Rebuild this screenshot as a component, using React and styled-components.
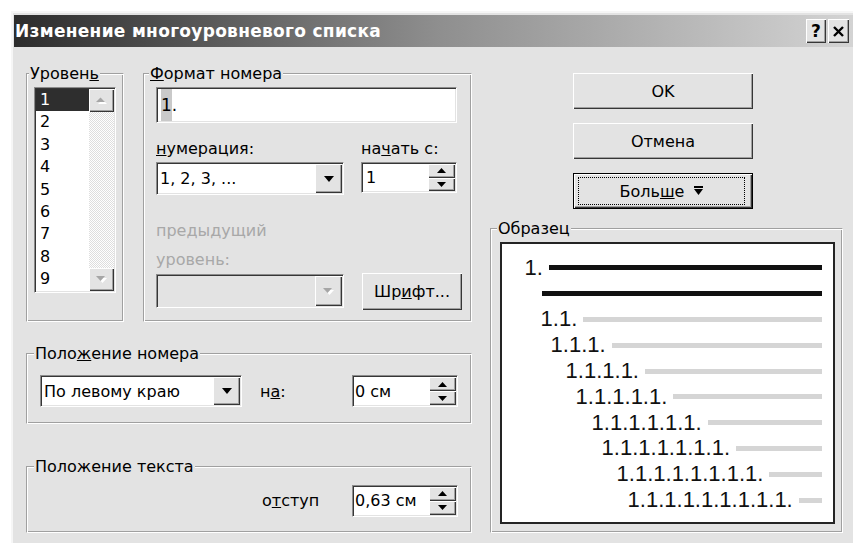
import React from 'react'
import styled, { createGlobalStyle, css } from 'styled-components'

// classic 3D palette, grey
const face = '#e3e3e3'
const light = '#ffffff'
const shadow = '#a0a0a0'
const dark = '#363636'
const grayText = '#a8a8a8'
const uiFont = 'Tahoma, "DejaVu Sans", sans-serif'

const GlobalStyle = createGlobalStyle`
  html, body { margin: 0; padding: 0; background: #fff; }
  body { width: 853px; height: 543px; overflow: hidden; }
`

const raised = css`
  background: ${face};
  box-shadow: inset 1px 1px ${light}, inset -1px -1px ${dark}, inset -2px -2px ${shadow};
`

const sunken = css`
  box-sizing: border-box;
  border: 1px solid;
  border-color: #8c8c8c ${light} ${light} #8c8c8c;
  box-shadow: inset 1px 1px ${dark}, inset -1px -1px ${face};
  padding: 1px;
`

const Window = styled.div`
  box-sizing: border-box;
  width: 846px;
  height: 532px;
  overflow: hidden;
  margin: 11px 0 0 11px;
  border-top: 2px solid #f6f6f6;
  border-left: 2px solid #f6f6f6;
  padding: 2px 0 0 1px;
  background: ${face};
  font: 16px ${uiFont};
  color: #000;
`

const TitleBar = styled.div`
  height: 32px;
  display: flex;
  align-items: center;
  padding-left: 1px;
  background: linear-gradient(to right, #2c2c2c 0%, #8e8e8e 50%, #d4d4d4 100%);
`

const Title = styled.div`
  flex: 1;
  color: #fff;
  font-weight: bold;
  font-size: 17px;
  letter-spacing: 0.3px;
  white-space: nowrap;
`

const CaptionButtons = styled.div`
  display: flex;
  gap: 2px;
  margin-right: 8px;
`

const CaptionButton = styled.div`
  ${raised};
  width: ${p => p.$w}px;
  height: 24px;
  display: flex;
  align-items: center;
  justify-content: center;
  font-weight: bold;
  font-size: 17px;
`

const Body = styled.div`
  display: flex;
  padding: 17px 0 0 12px;
`

const Main = styled.div`
  width: 446px;
  display: flex;
  flex-direction: column;
`

const TopRow = styled.div`
  display: flex;
  gap: 19px;
  align-items: stretch;
`

const Group = styled.fieldset`
  box-sizing: border-box;
  margin: ${p => p.$top || 0}px 0 0 0;
  min-width: 0;
  width: ${p => (p.$w ? `${p.$w}px` : 'auto')};
  flex: ${p => (p.$w ? 'none' : 1)};
  border: 1px solid;
  border-color: ${shadow} ${light} ${light} ${shadow};
  box-shadow: inset 1px 1px ${light}, inset -1px -1px ${shadow};
  padding: ${p => p.$pad};
`

const Caption = styled.legend`
  padding: 0 1px;
  margin-left: ${p => p.$shift}px;
  line-height: 19px;
  background: ${face};
`

/* level list */

const ListBox = styled.div`
  ${sunken};
  display: flex;
  width: 82px;
  height: 206px;
  background: #fff;
`

const Items = styled.div`
  flex: 1;
`

const Item = styled.div`
  height: 22.4px;
  line-height: 22.4px;
  padding-left: 4px;
  background: ${p => (p.$selected ? '#2e2e2e' : 'transparent')};
  color: ${p => (p.$selected ? '#fff' : '#000')};
`

const ScrollTrack = styled.div`
  width: 25px;
  display: flex;
  flex-direction: column;
  justify-content: space-between;
  background: repeating-conic-gradient(#ffffff 0 25%, #dedede 0 50%) 0 0 / 2px 2px;
`

const ScrollButton = styled.div`
  ${raised};
  height: 23px;
  display: flex;
  align-items: center;
  justify-content: center;
`

/* fields */

const NumberField = styled.div`
  ${sunken};
  width: 301px;
  height: 36px;
  background: #fff;
  display: flex;
  align-items: stretch;
  padding-left: 4px;
  font-size: 17px;
`

const Shade = styled.span`
  display: flex;
  align-items: center;
  background: #c9c9c9;
`

const Dot = styled.span`
  display: flex;
  align-items: center;
`

const Pair = styled.div`
  display: grid;
  grid-template-columns: 188px auto;
  column-gap: 17px;
  align-items: start;
  margin-top: ${p => p.$top}px;
`

const FieldLabel = styled.div`
  line-height: 19px;
`

const Hint = styled.div`
  margin-top: 21px;
  line-height: 29px;
  color: ${grayText};
`

const ComboBox = styled.div`
  ${sunken};
  width: ${p => p.$w}px;
  height: ${p => p.$h}px;
  display: flex;
  align-items: stretch;
  background: ${p => (p.$disabled ? face : '#fff')};
`

const FieldText = styled.div`
  flex: 1;
  display: flex;
  align-items: center;
  padding-left: ${p => p.$pad ?? 2}px;
  white-space: nowrap;
`

const ArrowButton = styled.div`
  ${raised};
  width: 27px;
  display: flex;
  align-items: center;
  justify-content: center;
`

const SpinButtons = styled.div`
  width: 27px;
  display: flex;
  flex-direction: column;
`

const SpinButton = styled.div`
  ${raised};
  flex: 1;
  display: flex;
  align-items: center;
  justify-content: center;
`

const PushButton = styled.div`
  ${raised};
  box-sizing: border-box;
  width: ${p => p.$w}px;
  height: ${p => p.$h}px;
  margin: ${p => p.$margin || 0};
  display: flex;
  align-items: center;
  justify-content: center;
  ${p =>
    p.$default &&
    css`
      border: 1px solid #000;
      padding: 3px 7px 3px 4px;
    `}
`

const FocusRing = styled.div`
  flex: 1;
  align-self: stretch;
  display: flex;
  align-items: center;
  justify-content: center;
  gap: 10px;
  border: 1px dotted #000;
`

const PosRow = styled.div`
  display: grid;
  grid-template-columns: 202px 110px 106px;
  align-items: center;
`

const RowLabel = styled.span`
  grid-column: 2;
  padding-left: ${p => p.$indent}px;
`

/* right side */

const Side = styled.div`
  width: 353px;
  margin-left: 18px;
  display: flex;
  flex-direction: column;
`

const ButtonStack = styled.div`
  display: flex;
  flex-direction: column;
  gap: 14px;
  margin: 9px 0 0 83px;
`

const Preview = styled.div`
  box-sizing: border-box;
  height: 282px;
  border: 2px solid #242424;
  background: #fff;
  padding: 11px 11px 0 0;
`

const PreviewRow = styled.div`
  height: 25.8px;
  display: flex;
  align-items: center;
  padding-left: ${p => p.$indent}px;
`

const PreviewNum = styled.span`
  font: 22px 'Liberation Sans', Arial, sans-serif;
  line-height: 1;
  margin-right: 6px;
  color: #111;
`

const Rule = styled.div`
  flex: 1;
  height: 5px;
  background: ${p => (p.$strong ? '#111' : '#d5d5d5')};
`

const Triangle = ({ up, color = '#000', w = 9, h = 5 }) => (
  <svg width={w} height={h} viewBox={`0 0 ${w} ${h}`}>
    <polygon
      points={up ? `0,${h} ${w},${h} ${w / 2},0` : `0,0 ${w},0 ${w / 2},${h}`}
      fill={color}
    />
  </svg>
)

// greyed-out arrow with the white emboss under it
const DisabledTriangle = ({ up }) => (
  <svg width="11" height="7" viewBox="0 0 11 7">
    <polygon
      points={up ? '1,6 10,6 5.5,1.5' : '1,1 10,1 5.5,6'}
      fill="#fff"
      transform="translate(1 1)"
    />
    <polygon points={up ? '0,5 9,5 4.5,0.5' : '0,0 9,0 4.5,5'} fill="#a6a6a6" />
  </svg>
)

const CloseGlyph = () => (
  <svg width="11" height="11" viewBox="0 0 11 11">
    <path d="M1 1 L10 10 M10 1 L1 10" stroke="#000" strokeWidth="2.4" />
  </svg>
)

const MoreGlyph = () => (
  <svg width="9" height="10" viewBox="0 0 9 10">
    <rect x="0" y="0" width="9" height="2" fill="#000" />
    <polygon points="0,3 9,3 4.5,9" fill="#000" />
  </svg>
)

const Spinner = ({ value, w, h, pad }) => (
  <ComboBox $w={w} $h={h}>
    <FieldText $pad={pad}>{value}</FieldText>
    <SpinButtons>
      <SpinButton>
        <Triangle up w={9} h={5} />
      </SpinButton>
      <SpinButton>
        <Triangle w={9} h={5} />
      </SpinButton>
    </SpinButtons>
  </ComboBox>
)

const Combo = ({ value, w, h, disabled }) => (
  <ComboBox $w={w} $h={h} $disabled={disabled}>
    <FieldText>{value}</FieldText>
    <ArrowButton>{disabled ? <DisabledTriangle /> : <Triangle w={10} h={6} />}</ArrowButton>
  </ComboBox>
)

const levels = [1, 2, 3, 4, 5, 6, 7, 8, 9]

const sample = [
  { num: '1.', indent: 22.6, strong: true },
  { num: '', indent: 40, strong: true },
  { num: '1.1.', indent: 38.6 },
  { num: '1.1.1.', indent: 48.6 },
  { num: '1.1.1.1.', indent: 63.6 },
  { num: '1.1.1.1.1.', indent: 73.6 },
  { num: '1.1.1.1.1.1.', indent: 89.6 },
  { num: '1.1.1.1.1.1.1.', indent: 99.6 },
  { num: '1.1.1.1.1.1.1.1.', indent: 114.6 },
  { num: '1.1.1.1.1.1.1.1.1.', indent: 125.6 },
]

export default function App() {
  return (
    <>
      <GlobalStyle />
      <Window>
        <TitleBar>
          <Title>Изменение многоуровневого списка</Title>
          <CaptionButtons>
            <CaptionButton $w={20}>?</CaptionButton>
            <CaptionButton $w={21}>
              <CloseGlyph />
            </CaptionButton>
          </CaptionButtons>
        </TitleBar>

        <Body>
          <Main>
            <TopRow>
              <Group $w={98} $pad="4px 5px 0 7px">
                <Caption $shift={-5}>
                  Уровен<u>ь</u>
                </Caption>
                <ListBox>
                  <Items>
                    {levels.map(n => (
                      <Item key={n} $selected={n === 1}>
                        {n}
                      </Item>
                    ))}
                  </Items>
                  <ScrollTrack>
                    <ScrollButton>
                      <DisabledTriangle up />
                    </ScrollButton>
                    <ScrollButton>
                      <DisabledTriangle />
                    </ScrollButton>
                  </ScrollTrack>
                </ListBox>
              </Group>

              <Group $pad="4px 12px 11px 12px">
                <Caption $shift={-7}>
                  <u>Ф</u>ормат номера
                </Caption>
                <NumberField>
                  <Shade>1</Shade>
                  <Dot>.</Dot>
                </NumberField>
                <Pair $top={16}>
                  <FieldLabel>
                    <u>н</u>умерация:
                  </FieldLabel>
                  <FieldLabel>
                    на<u>ч</u>ать с:
                  </FieldLabel>
                </Pair>
                <Pair $top={4}>
                  <Combo value="1, 2, 3, ..." w={188} h={33} />
                  <Spinner value="1" w={96} h={31} pad={3} />
                </Pair>
                <Hint>
                  предыдущий
                  <br />
                  уровень:
                </Hint>
                <Pair $top={0}>
                  <Combo w={188} h={34} disabled />
                  <PushButton $w={100} $h={37} $margin="-1px 0 0 1px">
                    <span>
                      Шр<u>и</u>фт...
                    </span>
                  </PushButton>
                </Pair>
              </Group>
            </TopRow>

            <Group $top={22} $pad="12px 12px 14px 13px">
              <Caption $shift={-6}>
                Поло<u>ж</u>ение номера
              </Caption>
              <PosRow>
                <Combo value="По левому краю" w={202} h={32} />
                <RowLabel $indent={18}>
                  н<u>а</u>:
                </RowLabel>
                <Spinner value="0 см" w={106} h={32} pad={1} />
              </PosRow>
            </Group>

            <Group $top={33} $pad="9px 12px 14px 13px">
              <Caption $shift={-6}>Положение текста</Caption>
              <PosRow>
                <RowLabel $indent={20}>
                  о<u>т</u>ступ
                </RowLabel>
                <Spinner value="0,63 см" w={106} h={32} pad={1} />
              </PosRow>
            </Group>
          </Main>

          <Side>
            <ButtonStack>
              <PushButton $w={180} $h={36}>
                OK
              </PushButton>
              <PushButton $w={180} $h={36}>
                Отмена
              </PushButton>
              <PushButton $w={180} $h={36} $default>
                <FocusRing>
                  <span>
                    Боль<u>ш</u>е
                  </span>
                  <MoreGlyph />
                </FocusRing>
              </PushButton>
            </ButtonStack>

            <Group $top={10} $pad="4px 7px 8px 9px">
              <Caption $shift={-3}>Образец</Caption>
              <Preview>
                {sample.map((row, i) => (
                  <PreviewRow key={i} $indent={row.indent}>
                    {row.num && <PreviewNum>{row.num}</PreviewNum>}
                    <Rule $strong={row.strong} />
                  </PreviewRow>
                ))}
              </Preview>
            </Group>
          </Side>
        </Body>
      </Window>
    </>
  )
}
